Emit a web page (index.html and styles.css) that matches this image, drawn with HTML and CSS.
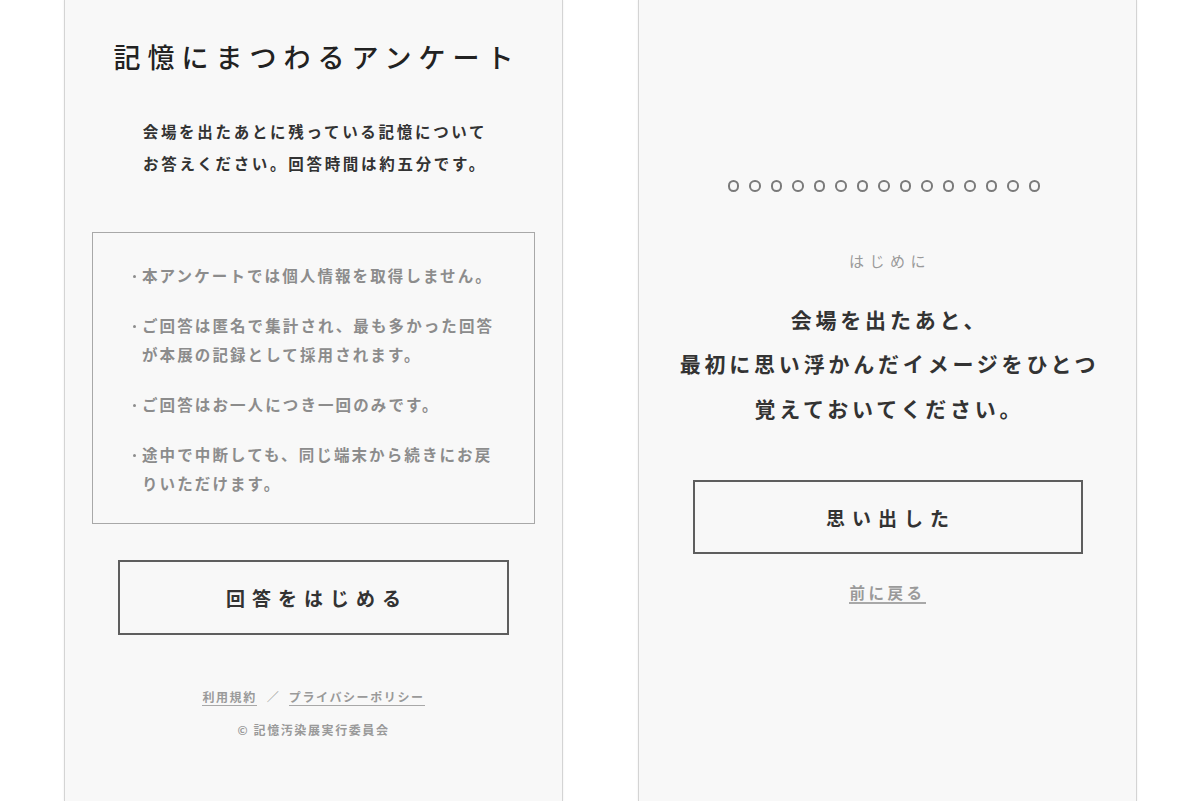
FILE: index.html
```html
<!DOCTYPE html>
<html lang="ja">
<head>
<meta charset="utf-8">
<title>記憶にまつわるアンケート</title>
<link rel="stylesheet" href="styles.css">
</head>
<body>
<div class="stage">
  <section class="panel panel-intro">
    <h1 class="title">記憶にまつわるアンケート</h1>
    <p class="lead">会場を出たあとに残っている記憶について<br>お答えください。回答時間は約五分です。</p>
    <ul class="notes">
      <li><span class="bullet"></span><span class="note-text">本アンケートでは個人情報を取得しません。</span></li>
      <li><span class="bullet"></span><span class="note-text">ご回答は匿名で集計され、最も多かった回答が本展の記録として採用されます。</span></li>
      <li><span class="bullet"></span><span class="note-text">ご回答はお一人につき一回のみです。</span></li>
      <li><span class="bullet"></span><span class="note-text">途中で中断しても、同じ端末から続きにお戻りいただけます。</span></li>
    </ul>
    <button class="btn" type="button">回答をはじめる</button>
    <nav class="links">
      <a class="link" href="#">利用規約</a>
      <span class="sep">／</span>
      <a class="link" href="#">プライバシーポリシー</a>
    </nav>
    <p class="copy">© 記憶汚染展実行委員会</p>
  </section>

  <section class="panel panel-question">
    <div class="progress">
      <span class="dot"></span><span class="dot"></span><span class="dot"></span><span class="dot"></span><span class="dot"></span>
      <span class="dot"></span><span class="dot"></span><span class="dot"></span><span class="dot"></span><span class="dot"></span>
      <span class="dot"></span><span class="dot"></span><span class="dot"></span><span class="dot"></span><span class="dot"></span>
    </div>
    <p class="step">はじめに</p>
    <p class="prompt">会場を出たあと、<br>最初に思い浮かんだイメージをひとつ<br>覚えておいてください。</p>
    <button class="btn btn-q" type="button">思い出した</button>
    <a class="back" href="#">前に戻る</a>
  </section>
</div>
</body>
</html>
```

FILE: styles.css
```css
* { box-sizing: border-box; }

html, body {
  margin: 0;
  padding: 0;
  background: #ffffff;
}

body {
  font-family: "Noto Sans CJK JP", "Noto Sans", sans-serif;
  color: #333;
}

.stage {
  display: flex;
  gap: 75px;
  padding: 0 63px 0 64px;
  height: 801px;
  overflow: hidden;
}

.panel {
  width: 499px;
  height: 801px;
  flex: 0 0 499px;
  background: #f8f8f8;
  border-left: 1px solid #d4d4d4;
  border-right: 1px solid #d4d4d4;
  box-shadow: 0 0 2px rgba(0, 0, 0, 0.08);
  display: flex;
  flex-direction: column;
  align-items: center;
  text-align: center;
}

/* ---------- left panel ---------- */
.panel-intro { padding-top: 39px; }

.title {
  margin: 0;
  font-size: 27px;
  line-height: 36px;
  font-weight: 500;
  letter-spacing: 7px;
  padding-left: 7px;
  color: #222;
}

.lead {
  margin: 40px 0 0;
  font-size: 15.5px;
  line-height: 32px;
  font-weight: 700;
  letter-spacing: 2.7px;
  padding-left: 3px;
  color: #333;
}

.notes {
  list-style: none;
  margin: 53px 0 0;
  width: 443px;
  border: 1px solid #a8a8a8;
  padding: 28px 30px 25px 39px;
  text-align: left;
}

.notes li {
  display: flex;
  font-size: 15.5px;
  line-height: 29px;
  font-weight: 700;
  letter-spacing: 2.1px;
  color: #8c8c8c;
}

.notes li + li { margin-top: 21px; }

.bullet {
  flex: 0 0 10px;
}

.bullet::before {
  content: "";
  display: block;
  width: 3px;
  height: 3px;
  border-radius: 50%;
  background: #8c8c8c;
  margin-top: 14px;
  margin-left: 1px;
}

.note-text {
  width: 362px;
}

.btn {
  display: flex;
  align-items: center;
  justify-content: center;
  width: 391px;
  height: 75px;
  margin-top: 36px;
  border: 2px solid #5e5e5e;
  background: transparent;
  font-family: inherit;
  font-size: 19px;
  font-weight: 700;
  letter-spacing: 7px;
  padding: 0 0 0 7px;
  color: #333;
  cursor: pointer;
}

.links {
  margin-top: 54px;
  display: flex;
  align-items: flex-start;
  font-size: 12px;
  line-height: 16px;
  color: #9a9a9a;
  font-weight: 700;
}

.link {
  color: #9a9a9a;
  text-decoration: none;
  letter-spacing: 1.6px;
  border-bottom: 1.5px solid #a8a8a8;
}

.sep {
  margin: 0 10px;
  color: #9a9a9a;
}

.copy {
  margin: 16px 0 0;
  font-size: 12px;
  line-height: 16px;
  letter-spacing: 1.6px;
  font-weight: 700;
  color: #9a9a9a;
}

/* ---------- right panel ---------- */
.panel-question { padding-top: 180px; }

.progress {
  display: flex;
  gap: 10px;
  padding-right: 7px;
}

.dot {
  width: 11.5px;
  height: 11.5px;
  border: 2px solid #7a7a7a;
  border-radius: 50%;
}

.step {
  margin: 59px 0 0;
  font-size: 15px;
  line-height: 20px;
  letter-spacing: 5.5px;
  padding-left: 5px;
  color: #9a9a9a;
}

.prompt {
  margin: 26px 0 0;
  font-size: 21px;
  line-height: 44.5px;
  font-weight: 700;
  letter-spacing: 3.8px;
  padding-left: 4px;
  color: #333;
}

.btn-q {
  width: 390px;
  height: 74px;
  margin-top: 50px;
}

.back {
  margin-top: 28px;
  font-size: 15.5px;
  line-height: 20px;
  letter-spacing: 3.5px;
  color: #9a9a9a;
  text-decoration: none;
  border-bottom: 2px solid #a8a8a8;
  font-weight: 700;
}
```
